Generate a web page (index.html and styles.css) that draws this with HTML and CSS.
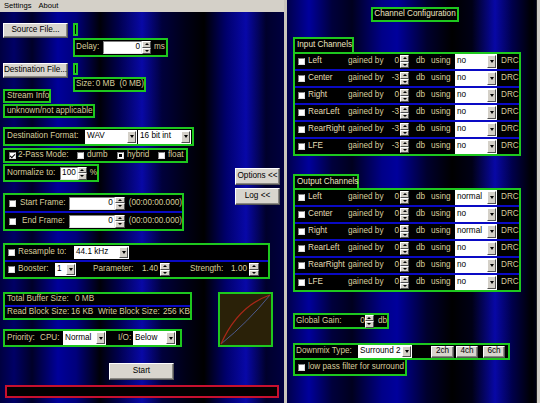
FILE: index.html
```html
<!DOCTYPE html>
<html>
<head>
<meta charset="utf-8">
<title>Audio Converter</title>
<link rel="stylesheet" href="styles.css">
</head>
<body>
<div class="app">
  <div class="left">
    <div class="menubar"><span>Settings</span><span>About</span></div>
    <div class="lbody">
      <div class="rowA">
        <div class="btn b-file">Source File...</div>
        <div class="col">
          <div class="box tiny t13"></div>
          <div class="box delay">
            <span class="w27">Delay:</span><span class="inp w39">0</span><span class="spin"><i></i><i></i></span><span class="ml3">ms</span>
          </div>
        </div>
      </div>
      <div class="rowB">
        <div class="col">
          <div class="btn b-file b-dest">Destination File...</div>
          <div class="box stream">Stream Info</div>
        </div>
        <div class="col colB">
          <div class="box tiny t12"></div>
          <div class="box size"><span class="w23">Size:</span><span>0 MB&nbsp;&nbsp;(0 MB)</span></div>
        </div>
      </div>
      <div class="box unknown">unknown/not applicable</div>

      <div class="mid">
        <div class="col midleft">
          <div class="box fmt">
            <span class="w78">Destination Format:</span>
            <span class="sel w52"><span class="sv">WAV</span><span class="dd"></span></span>
            <span class="sel w53 ml1"><span class="sv">16 bit int</span><span class="dd"></span></span>
          </div>
          <div class="box pass">
            <i class="cb on"></i><span class="ml2 w59">2-Pass Mode:</span>
            <i class="cb"></i><span class="ml3 w30">dumb</span>
            <i class="cb dot"></i><span class="ml3 w31">hybrid</span>
            <i class="cb"></i><span class="ml3">float</span>
          </div>
          <div class="box norm">
            <span class="w53">Normalize to:</span><span class="inp w18">100</span><span class="spin"><i></i><i></i></span><span class="ml3">%</span>
          </div>
          <div class="box frames">
            <div class="frow"><i class="cb"></i><span class="flabel">Start Frame:</span><span class="inp w46">0</span><span class="spin s10"><i></i><i></i></span><span class="ml4">(00:00:00.000)</span></div>
            <div class="sep"></div>
            <div class="frow"><i class="cb"></i><span class="flabel pl2">End Frame:</span><span class="inp w46">0</span><span class="spin s10"><i></i><i></i></span><span class="ml4">(00:00:00.000)</span></div>
          </div>
        </div>
        <div class="col midright">
          <div class="btn b-side">Options &lt;&lt;</div>
          <div class="btn b-side b-log">Log &lt;&lt;</div>
        </div>
      </div>

      <div class="box resample">
        <div class="rrow"><i class="cb"></i><span class="ml3 w56">Resample to:</span><span class="sel w55"><span class="sv">44.1 kHz</span><span class="dd"></span></span></div>
        <div class="sep"></div>
        <div class="rrow">
          <i class="cb"></i><span class="ml3 w37">Booster:</span><span class="sel w21"><span class="sv">1</span><span class="dd"></span></span>
          <span class="ml17 w45">Parameter:</span><span class="val w20">1.40</span><span class="spin s10 ml2"><i></i><i></i></span>
          <span class="ml20 w37">Strength:</span><span class="val w20">1.00</span><span class="spin s10 ml2"><i></i><i></i></span>
        </div>
      </div>

      <div class="bottom">
        <div class="col">
          <div class="box buffer">
            <div class="brow"><span class="w68">Total Buffer Size:</span><span>0 MB</span></div>
            <div class="sep"></div>
            <div class="brow"><span class="w64">Read Block Size:</span><span class="w27">16 KB</span><span class="w65">Write Block Size:</span><span>256 KB</span></div>
          </div>
          <div class="box prio">
            <span class="w33">Priority:</span><span class="w23">CPU:</span>
            <span class="sel w43"><span class="sv">Normal</span><span class="dd"></span></span>
            <span class="ml12 w15">I/O:</span>
            <span class="sel w43"><span class="sv">Below</span><span class="dd"></span></span>
          </div>
        </div>
        <div class="box graph">
          <svg width="51" height="51" viewBox="0 0 51 51">
            <path d="M1 50 Q28 28 50 1" stroke="#4c5a8c" stroke-width="1" fill="none"/>
            <path d="M1 50 Q18 12 50 1" stroke="#a82818" stroke-width="1.2" fill="none"/>
          </svg>
        </div>
      </div>

      <div class="btn b-start">Start</div>
      <div class="progress"></div>
    </div>
  </div>
  <div class="divider"></div>
  <div class="right">
    <div class="box cctitle">Channel Configuration</div>

    <div class="box tab tab-in">Input Channels</div>
    <div class="box chtable">
      <div class="chrow"><i class="cb"></i><span class="cname">Left</span><span class="gb">gained by</span><span class="gv">0</span><span class="spin"><i></i><i></i></span><span class="db">db</span><span class="using">using</span><span class="sel chsel"><span class="sv">no</span><span class="dd"></span></span><span class="drc">DRC</span></div>
      <div class="sep"></div>
      <div class="chrow"><i class="cb"></i><span class="cname">Center</span><span class="gb">gained by</span><span class="gv">-3</span><span class="spin"><i></i><i></i></span><span class="db">db</span><span class="using">using</span><span class="sel chsel"><span class="sv">no</span><span class="dd"></span></span><span class="drc">DRC</span></div>
      <div class="sep"></div>
      <div class="chrow"><i class="cb"></i><span class="cname">Right</span><span class="gb">gained by</span><span class="gv">0</span><span class="spin"><i></i><i></i></span><span class="db">db</span><span class="using">using</span><span class="sel chsel"><span class="sv">no</span><span class="dd"></span></span><span class="drc">DRC</span></div>
      <div class="sep"></div>
      <div class="chrow"><i class="cb"></i><span class="cname">RearLeft</span><span class="gb">gained by</span><span class="gv">-3</span><span class="spin"><i></i><i></i></span><span class="db">db</span><span class="using">using</span><span class="sel chsel"><span class="sv">no</span><span class="dd"></span></span><span class="drc">DRC</span></div>
      <div class="sep"></div>
      <div class="chrow"><i class="cb"></i><span class="cname">RearRight</span><span class="gb">gained by</span><span class="gv">-3</span><span class="spin"><i></i><i></i></span><span class="db">db</span><span class="using">using</span><span class="sel chsel"><span class="sv">no</span><span class="dd"></span></span><span class="drc">DRC</span></div>
      <div class="sep"></div>
      <div class="chrow"><i class="cb"></i><span class="cname">LFE</span><span class="gb">gained by</span><span class="gv">-3</span><span class="spin"><i></i><i></i></span><span class="db">db</span><span class="using">using</span><span class="sel chsel"><span class="sv">no</span><span class="dd"></span></span><span class="drc">DRC</span></div>
    </div>

    <div class="box tab tab-out">Output Channels</div>
    <div class="box chtable">
      <div class="chrow"><i class="cb"></i><span class="cname">Left</span><span class="gb">gained by</span><span class="gv">0</span><span class="spin"><i></i><i></i></span><span class="db">db</span><span class="using">using</span><span class="sel chsel"><span class="sv">normal</span><span class="dd"></span></span><span class="drc">DRC</span></div>
      <div class="sep"></div>
      <div class="chrow"><i class="cb"></i><span class="cname">Center</span><span class="gb">gained by</span><span class="gv">0</span><span class="spin"><i></i><i></i></span><span class="db">db</span><span class="using">using</span><span class="sel chsel"><span class="sv">no</span><span class="dd"></span></span><span class="drc">DRC</span></div>
      <div class="sep"></div>
      <div class="chrow"><i class="cb"></i><span class="cname">Right</span><span class="gb">gained by</span><span class="gv">0</span><span class="spin"><i></i><i></i></span><span class="db">db</span><span class="using">using</span><span class="sel chsel"><span class="sv">normal</span><span class="dd"></span></span><span class="drc">DRC</span></div>
      <div class="sep"></div>
      <div class="chrow"><i class="cb"></i><span class="cname">RearLeft</span><span class="gb">gained by</span><span class="gv">0</span><span class="spin"><i></i><i></i></span><span class="db">db</span><span class="using">using</span><span class="sel chsel"><span class="sv">no</span><span class="dd"></span></span><span class="drc">DRC</span></div>
      <div class="sep"></div>
      <div class="chrow"><i class="cb"></i><span class="cname">RearRight</span><span class="gb">gained by</span><span class="gv">0</span><span class="spin"><i></i><i></i></span><span class="db">db</span><span class="using">using</span><span class="sel chsel"><span class="sv">no</span><span class="dd"></span></span><span class="drc">DRC</span></div>
      <div class="sep"></div>
      <div class="chrow"><i class="cb"></i><span class="cname">LFE</span><span class="gb">gained by</span><span class="gv">0</span><span class="spin"><i></i><i></i></span><span class="db">db</span><span class="using">using</span><span class="sel chsel"><span class="sv">no</span><span class="dd"></span></span><span class="drc">DRC</span></div>
    </div>

    <div class="box gain"><span class="w58">Global Gain:</span><span class="val w11">0</span><span class="spin"><i></i><i></i></span><span class="ml4">db</span></div>

    <div class="box downmix">
      <span class="w62">Downmix Type:</span>
      <span class="sel w54"><span class="sv">Surround 2</span><span class="dd"></span></span>
      <span class="btn b-ch ml19">2ch</span>
      <span class="btn b-ch ml2">4ch</span>
      <span class="btn b-ch ml5">6ch</span>
    </div>
    <div class="box lowpass"><i class="cb"></i><span class="ml3">low pass filter for surround</span></div>
  </div>
  <div class="edge"></div>
</div>
</body>
</html>
```
FILE: styles.css
```css
* { box-sizing: border-box; margin: 0; padding: 0; }
html, body { width: 540px; height: 403px; overflow: hidden; background: #000; }
body {
  font-family: "Liberation Sans", Arial, sans-serif;
  font-size: 8.2px;
  line-height: 1;
  color: #d8cd9c;
  white-space: nowrap;
}
.app { display: flex; width: 540px; height: 403px; }

.left { width: 284px; display: flex; flex-direction: column; }
.menubar {
  height: 12px; background: #d4d0c8; color: #000;
  display: flex; align-items: center; gap: 7px;
  padding-left: 4px; font-size: 7.6px;
}
.lbody {
  flex: 1;
  padding-left: 3px;
  background: linear-gradient(to right,
    #000040 0px, #000066 14px, #000028 32px, #00009a 58px, #00007c 76px,
    #000008 100px, #00004c 118px, #0808a6 142px, #00003c 162px, #000016 186px,
    #000000 204px, #00006c 226px, #0808a8 246px, #00002c 266px, #000040 284px);
}
.divider { width: 3px; background: #c8c4bc; }
.right {
  width: 249px;
  padding-left: 6px;
  background: linear-gradient(to right,
    #00004a 0px, #00009c 22px, #00003c 45px, #00001e 65px, #000088 95px,
    #00009c 110px, #00002e 140px, #000000 165px, #000016 185px, #0808a6 208px,
    #00004c 225px, #000000 245px, #000010 249px);
}
.edge { width: 4px; background: linear-gradient(to right, #202020 0 1px, #d4d0c8 1px); }

.col { display: flex; flex-direction: column; }

/* generic group box */
.box {
  border: 2px solid #1ec81e;
  background: #000;
  display: flex;
  align-items: center;
  padding-left: 1px;
}

/* buttons */
.btn {
  background: #d8d5ce;
  color: #000;
  border: 1px solid;
  border-color: #ffffff #555 #555 #ffffff;
  box-shadow: inset -1px -1px #8a8884;
  display: flex; align-items: center; justify-content: center;
}

/* inputs */
.inp {
  background: #fff; color: #000; height: 13px;
  display: flex; align-items: center; justify-content: flex-end;
  padding-right: 1px;
  border: 1px solid; border-color: #808080 #e8e8e8 #e8e8e8 #808080;
}
.val { text-align: right; }
.spin { display: inline-flex; flex-direction: column; width: 9px; height: 13px; }
.spin.s10 { width: 10px; }
.spin i {
  flex: 1; background: #d4d0c8;
  border: 1px solid; border-color: #fff #505050 #505050 #fff;
  display: flex; align-items: center; justify-content: center;
}
.spin i:first-child::after {
  content: ""; border-left: 2px solid transparent; border-right: 2px solid transparent;
  border-bottom: 2px solid #000;
}
.spin i:last-child::after {
  content: ""; border-left: 2px solid transparent; border-right: 2px solid transparent;
  border-top: 2px solid #000;
}

/* selects */
.sel {
  display: inline-flex; background: #fff; color: #000; height: 14px;
  align-items: stretch; padding: 1px;
}
.sel .sv { flex: 1; display: flex; align-items: center; padding-left: 1px; overflow: hidden; }
.sel .dd {
  width: 9px; background: #d4d0c8;
  border: 1px solid; border-color: #fff #505050 #505050 #fff;
  display: flex; align-items: center; justify-content: center;
}
.sel .dd::after {
  content: ""; border-left: 2.5px solid transparent; border-right: 2.5px solid transparent;
  border-top: 3px solid #000;
}

/* checkboxes */
.cb {
  display: inline-flex; align-items: center; justify-content: center;
  width: 7px; height: 7px; background: #fff; flex: none;
  border: 1px solid; border-color: #808080 #dcdcdc #dcdcdc #808080;
}
.cb.on::after {
  content: ""; width: 2px; height: 4px; margin-top: -1px;
  border: solid #000; border-width: 0 1px 1px 0; transform: rotate(45deg);
}
.cb.dot::after { content: ""; width: 3px; height: 3px; background: #000; }

.sep { height: 2px; background: #0a0ac4; flex: none; align-self: stretch; }

/* widths / margins */
.w11 { width: 11px; } .w15 { width: 15px; } .w18 { width: 18px; } .w20 { width: 20px; }
.w21 { width: 21px; } .w23 { width: 23px; } .w27 { width: 27px; } .w30 { width: 30px; }
.w31 { width: 31px; } .w33 { width: 33px; } .w37 { width: 37px; } .w39 { width: 39px; }
.w43 { width: 43px; } .w45 { width: 45px; } .w46 { width: 46px; } .w52 { width: 52px; }
.w53 { width: 53px; } .w54 { width: 54px; } .w55 { width: 55px; } .w56 { width: 56px; }
.w58 { width: 58px; } .w59 { width: 59px; } .w62 { width: 62px; } .w64 { width: 64px; }
.w65 { width: 65px; } .w68 { width: 68px; } .w78 { width: 78px; }
.ml1 { margin-left: 1px; } .ml2 { margin-left: 2px; } .ml3 { margin-left: 3px; }
.ml4 { margin-left: 4px; } .ml5 { margin-left: 5px; } .ml12 { margin-left: 12px; }
.ml17 { margin-left: 17px; } .ml19 { margin-left: 19px; } .ml20 { margin-left: 20px; }
.pl2 { padding-left: 2px; }

/* left panel layout */
.rowA { display: flex; margin-top: 11px; }
.b-file { width: 65px; height: 15px; }
.rowA .col, .colB { margin-left: 5px; }
.tiny { width: 5px; padding: 0; }
.t13 { height: 13px; }
.t12 { height: 12px; }
.delay { width: 95px; height: 19px; margin-top: 2px; }
.rowB { display: flex; margin-top: 6px; }
.stream { width: 48px; height: 14px; margin-top: 11px; padding-left: 2px; }
.size { width: 73px; height: 15px; margin-top: 2px; }
.unknown { width: 92px; height: 14px; margin-top: 1px; padding-left: 2px; }

.mid { display: flex; margin-top: 9px; }
.midleft { width: 191px; }
.midright { margin-left: 41px; padding-top: 41px; }
.b-side { width: 45px; height: 17px; }
.b-log { margin-top: 3px; }
.fmt { width: 191px; height: 19px; padding-left: 2px; }
.pass { width: 185px; height: 15px; margin-top: 2px; padding-left: 4px; }
.norm { width: 96px; height: 18px; margin-top: 1px; padding-left: 2px; }
.frames { width: 181px; height: 38px; margin-top: 11px; flex-direction: column; align-items: stretch; padding: 0; }
.frow { height: 16px; display: flex; align-items: center; padding-left: 4px; }
.flabel { width: 49px; margin-left: 4px; }

.resample { width: 267px; height: 36px; margin-top: 12px; flex-direction: column; align-items: stretch; padding: 0; }
.rrow { height: 15px; display: flex; align-items: center; padding-left: 3px; }
.rrow .sel { height: 13px; }

.bottom { display: flex; margin-top: 13px; }
.buffer { width: 189px; height: 28px; flex-direction: column; align-items: stretch; padding: 0; }
.brow { height: 11px; display: flex; align-items: center; padding-left: 2px; }
.prio { width: 179px; height: 18px; margin-top: 9px; padding-left: 2px; }
.graph { width: 55px; height: 55px; margin-left: 26px; background: #2a2108; padding: 0; }
.graph svg { display: block; }

.b-start { width: 65px; height: 17px; margin-top: 16px; margin-left: 106px; }
.progress { width: 274px; height: 13px; margin-top: 5px; margin-left: 2px; border: 2px solid #c8102e; background: #040000; }

/* right panel layout */
.cctitle { width: 88px; height: 15px; margin-top: 7px; margin-left: 78px; justify-content: center; padding: 0; color: #ece4c0; }
.tab { height: 15px; border-bottom: none; padding-left: 2px; color: #ece4c0; }
.tab-in { width: 61px; margin-top: 15px; }
.tab-out { width: 66px; margin-top: 18px; height: 14px; }
.chtable { width: 228px; height: 104px; flex-direction: column; align-items: stretch; padding: 0; }
.chrow { display: flex; align-items: center; height: 15px; }
.chrow .cb { margin-left: 3px; }
.cname { margin-left: 3px; width: 40px; color: #e4dcb4; }
.gb { width: 36px; }
.gv { width: 16px; text-align: right; padding-right: 1px; }
.db { width: 22px; padding-left: 7px; }
.using { width: 24px; }
.chsel { width: 42px; height: 15px; }
.drc { padding-left: 4px; }

.gain { width: 96px; height: 16px; margin-top: 21px; }
.downmix { width: 217px; height: 17px; margin-top: 14px; padding-left: 1px; }
.downmix .sel { height: 13px; }
.b-ch { width: 22px; height: 12px; }
.b-ch.ml19 { width: 23px; }
.lowpass { width: 114px; height: 16px; border-top: none; padding-left: 3px; }
```
